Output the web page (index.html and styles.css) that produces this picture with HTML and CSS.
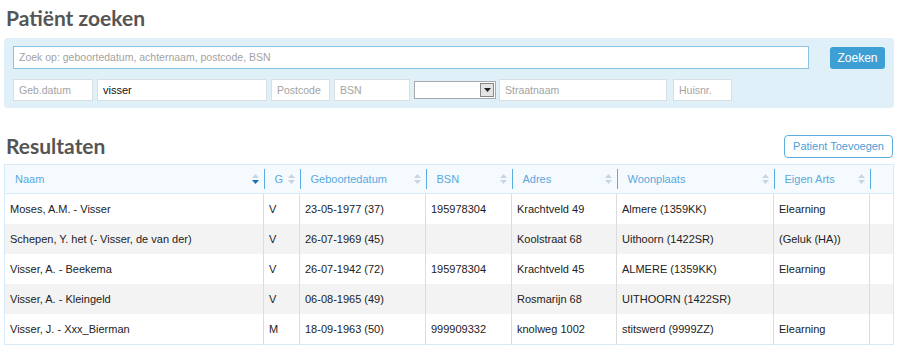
FILE: index.html
```html
<!DOCTYPE html>
<html lang="nl">
<head>
    <meta charset="UTF-8">
    <title>Patiënt zoeken</title>
    <link rel="stylesheet" href="styles.css">
</head>
<body>
<div class="page">
    <h1 class="title">Patiënt zoeken</h1>

    <div class="search">
        <div class="search-row">
            <div class="field field-main placeholder">Zoek op: geboortedatum, achternaam, postcode, BSN</div>
            <div class="btn-search">Zoeken</div>
        </div>
        <div class="search-row small">
            <div class="field w-geb placeholder">Geb.datum</div>
            <div class="field w-naam">visser</div>
            <div class="field w-post placeholder">Postcode</div>
            <div class="field w-bsn placeholder">BSN</div>
            <div class="select">
                <span class="select-arrow"><svg width="7" height="4" viewBox="0 0 7 4"><path d="M0 0h7L3.5 4z" fill="#222"/></svg></span>
            </div>
            <div class="field w-straat placeholder">Straatnaam</div>
            <div class="field w-huis placeholder">Huisnr.</div>
        </div>
    </div>

    <div class="results-head">
        <h2 class="title">Resultaten</h2>
        <div class="btn-add">Patient Toevoegen</div>
    </div>

    <table class="results">
        <colgroup>
            <col style="width:259px">
            <col style="width:36px">
            <col style="width:126px">
            <col style="width:86px">
            <col style="width:105px">
            <col style="width:157px">
            <col style="width:96px">
            <col style="width:24px">
        </colgroup>
        <thead>
            <tr>
                <th class="first"><div class="th">Naam <svg class="sort" width="7" height="10" viewBox="0 0 7 10"><path d="M0 4L3.5 0L7 4z" fill="#c9d5de"/><path d="M0 6h7L3.5 10z" fill="#1b6fb0"/></svg></div></th>
                <th><div class="th">G <svg class="sort" width="7" height="10" viewBox="0 0 7 10"><path d="M0 4L3.5 0L7 4z M0 6h7L3.5 10z" fill="#c9d5de"/></svg></div></th>
                <th><div class="th">Geboortedatum <svg class="sort" width="7" height="10" viewBox="0 0 7 10"><path d="M0 4L3.5 0L7 4z M0 6h7L3.5 10z" fill="#c9d5de"/></svg></div></th>
                <th><div class="th">BSN <svg class="sort" width="7" height="10" viewBox="0 0 7 10"><path d="M0 4L3.5 0L7 4z M0 6h7L3.5 10z" fill="#c9d5de"/></svg></div></th>
                <th><div class="th">Adres <svg class="sort" width="7" height="10" viewBox="0 0 7 10"><path d="M0 4L3.5 0L7 4z M0 6h7L3.5 10z" fill="#c9d5de"/></svg></div></th>
                <th><div class="th">Woonplaats <svg class="sort" width="7" height="10" viewBox="0 0 7 10"><path d="M0 4L3.5 0L7 4z M0 6h7L3.5 10z" fill="#c9d5de"/></svg></div></th>
                <th><div class="th">Eigen Arts <svg class="sort" width="7" height="10" viewBox="0 0 7 10"><path d="M0 4L3.5 0L7 4z M0 6h7L3.5 10z" fill="#c9d5de"/></svg></div></th>
                <th><div class="th"></div></th>
            </tr>
        </thead>
        <tbody>
            <tr>
                <td class="first">Moses, A.M. - Visser</td>
                <td>V</td>
                <td>23-05-1977 (37)</td>
                <td>195978304</td>
                <td>Krachtveld 49</td>
                <td>Almere (1359KK)</td>
                <td>Elearning</td>
                <td></td>
            </tr>
            <tr>
                <td class="first">Schepen, Y. het (- Visser, de van der)</td>
                <td>V</td>
                <td>26-07-1969 (45)</td>
                <td></td>
                <td>Koolstraat 68</td>
                <td>Uithoorn (1422SR)</td>
                <td>(Geluk (HA))</td>
                <td></td>
            </tr>
            <tr>
                <td class="first">Visser, A. - Beekema</td>
                <td>V</td>
                <td>26-07-1942 (72)</td>
                <td>195978304</td>
                <td>Krachtveld 45</td>
                <td>ALMERE (1359KK)</td>
                <td>Elearning</td>
                <td></td>
            </tr>
            <tr>
                <td class="first">Visser, A. - Kleingeld</td>
                <td>V</td>
                <td>06-08-1965 (49)</td>
                <td></td>
                <td>Rosmarijn 68</td>
                <td>UITHOORN (1422SR)</td>
                <td></td>
                <td></td>
            </tr>
            <tr>
                <td class="first">Visser, J. - Xxx_Bierman</td>
                <td>M</td>
                <td>18-09-1963 (50)</td>
                <td>999909332</td>
                <td>knolweg 1002</td>
                <td>stitswerd (9999ZZ)</td>
                <td>Elearning</td>
                <td></td>
            </tr>
        </tbody>
    </table>
</div>
</body>
</html>
```

FILE: styles.css
```css
body {
    margin: 0;
    background: #fff;
    font-family: "Liberation Sans", Arial, sans-serif;
    font-size: 11px;
    color: #222;
}
.page {
    padding: 0 6px 0 4px;
}
.title {
    font-family: Lato, "Open Sans", sans-serif;
    font-weight: 700;
    font-size: 21px;
    line-height: 28px;
    color: #555;
    margin: 4px 0 6px 2px;
}

/* zoekpaneel */
.search {
    background: #e0f0f9;
    border-radius: 4px;
    padding: 8px 9px 7px 9px;
}
.search-row {
    display: flex;
    align-items: center;
}
.search-row.small {
    margin-top: 10px;
    gap: 4px;
}
.field {
    box-sizing: border-box;
    height: 22px;
    line-height: 20px;
    background: #fff;
    border: 1px solid #d9dee2;
    padding: 0 5px;
    color: #111;
    white-space: nowrap;
    overflow: hidden;
}
.field.placeholder {
    color: #a3a3a3;
    font-family: "Liberation Sans", Arial, sans-serif;
    font-size: 10.5px;
}
.field-main {
    flex: 1;
    height: 23px;
    line-height: 21px;
    border-color: #8cc3e4;
}
.btn-search {
    margin-left: 21px;
    width: 55px;
    height: 22px;
    line-height: 22px;
    text-align: center;
    background: #3d9fd4;
    color: #fff;
    border-radius: 3px;
    font-size: 12px;
}
.w-geb { width: 80px; }
.w-naam { width: 170px; }
.w-post { width: 59px; }
.w-bsn { width: 76px; }
.w-straat { width: 168px; margin-left: -1px; }
.w-huis { width: 59px; margin-left: 2px; }
.select {
    box-sizing: border-box;
    width: 82px;
    height: 18px;
    background: #fff;
    border: 1px solid #a9a9a9;
    display: flex;
    justify-content: flex-end;
    align-items: center;
    padding-right: 1px;
}
.select-arrow {
    box-sizing: border-box;
    width: 14px;
    height: 14px;
    border: 1px solid #888;
    background: #e4e4e4;
    display: flex;
    align-items: center;
    justify-content: center;
}

/* resultaten */
.results-head {
    display: flex;
    justify-content: space-between;
    align-items: flex-end;
    margin-top: 24px;
    margin-bottom: 6px;
}
.results-head .title {
    margin: 0 0 -2px 2px;
}
.btn-add {
    height: 21px;
    line-height: 21px;
    padding: 0 8px;
    border: 1px solid #5eaedf;
    border-radius: 4px;
    color: #4a9fd8;
    background: #fff;
    margin-right: 1px;
}

.results {
    width: 890px;
    table-layout: fixed;
    border-collapse: collapse;
    border: 1px solid #d7eaf7;
}
.results th {
    background: #f5fafe;
    padding: 4px 0 4px 0;
    height: 20px;
    font-weight: normal;
    text-align: left;
    border-bottom: 1px solid #d7eaf7;
}
.th {
    display: flex;
    align-items: center;
    justify-content: space-between;
    height: 20px;
    border-left: 1px solid #5aaee0;
    padding: 0 5px 0 10px;
    color: #5aa8dd;
    white-space: nowrap;
}
th.first .th {
    border-left: none;
}
.sort {
    flex: none;
}
.results td {
    height: 30px;
    padding: 0 0 0 5px;
    border-left: 1px solid #dcdcdc;
    white-space: nowrap;
    overflow: hidden;
    color: #222;
}
.results td.first {
    border-left: none;
}
.results tbody tr:nth-child(even) td {
    background: #f3f3f3;
}
```
